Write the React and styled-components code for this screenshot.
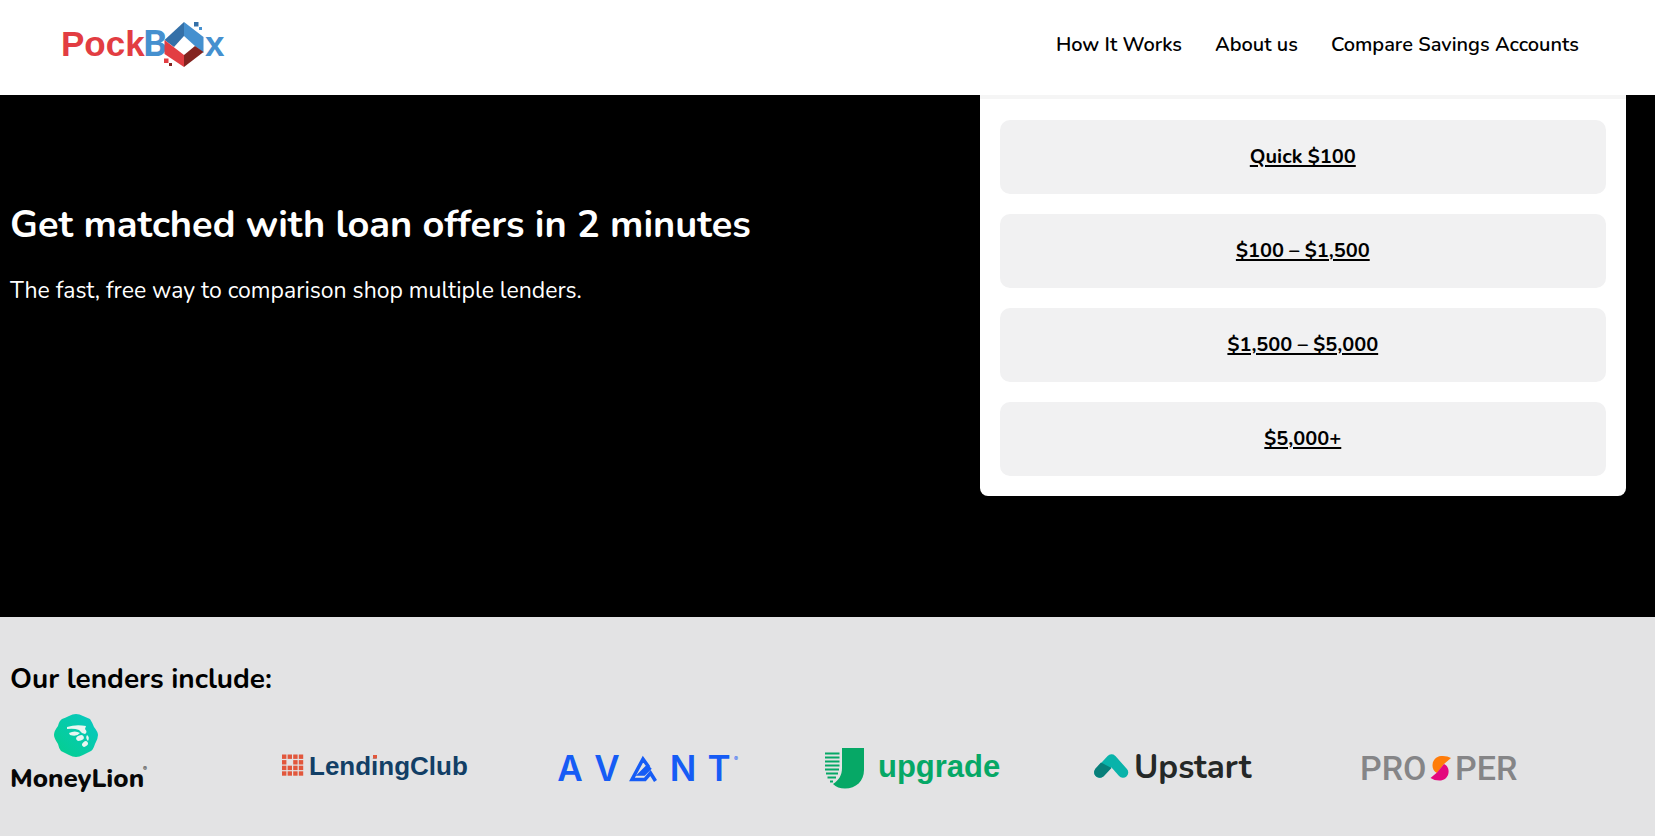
import styled, { createGlobalStyle } from "styled-components";

const GlobalStyle = createGlobalStyle`
  * {
    box-sizing: border-box;
  }
  body {
    margin: 0;
    background: #e3e3e4;
    color: #000;
    font-family: Nunito, Lato, "Open Sans", sans-serif;
  }
`;

const Header = styled.header`
  position: sticky;
  top: 0;
  z-index: 1;
  display: flex;
  align-items: center;
  justify-content: space-between;
  padding: 20px 76px 25px 60px;
  background: #fff;
  box-shadow: 0 4px 0 rgba(0, 0, 0, 0.04);
`;

const LogoLink = styled.a`
  display: flex;
`;

const Nav = styled.nav`
  display: flex;
  gap: 33px;
`;

const NavLink = styled.a`
  color: #000;
  font-size: 20px;
  font-weight: 600;
  line-height: 28px;
  text-decoration: none;
`;

const Hero = styled.section`
  display: grid;
  grid-template-columns: 3fr 2fr;
  padding: 0 29px 121px 10px;
  background: #000;
`;

const HeroText = styled.div`
  padding-top: 105px;
  color: #fff;
`;

const Title = styled.h1`
  margin: 0 0 26px;
  font-size: 38px;
  font-weight: 700;
  line-height: 50px;
`;

const Subtitle = styled.p`
  margin: 0;
  font-size: 23px;
  line-height: 30px;
`;

const Card = styled.div`
  display: flex;
  flex-direction: column;
  gap: 20px;
  padding: 25px 20px 20px;
  background: #fff;
  border-radius: 0 0 8px 8px;
`;

const AmountLink = styled.a`
  padding: 22px;
  background: #f1f1f2;
  border-radius: 10px;
  color: #000;
  font-size: 20px;
  font-weight: 700;
  line-height: 30px;
  text-align: center;
  text-decoration: underline;
  text-decoration-thickness: 2px;
  text-underline-offset: 2px;
`;

const Lenders = styled.section`
  padding: 42px 29px 41px 10px;
`;

const LendersTitle = styled.h2`
  margin: 0 0 14px;
  font-size: 28px;
  font-weight: 700;
  line-height: 40px;
`;

const LenderList = styled.ul`
  display: grid;
  grid-template-columns: repeat(6, 1fr);
  align-items: end;
  margin: 0;
  padding: 0;
  list-style: none;
`;

const Lender = styled.li`
  display: flex;
`;

const Logo = styled.svg`
  overflow: visible;
`;

const Wordmark = styled.text`
  font-family: ${(p) => p.$font || "Inter"}, sans-serif;
  font-size: ${(p) => p.$size}px;
  font-weight: ${(p) => p.$weight || 700};
`;

const PockBoxLogo = () => (
  <Logo width="170" height="50" viewBox="60 20 170 50" role="img" aria-label="PockBox">
    <Wordmark $font="Liberation Sans" $size={35} x="61" y="56" fill="#e23d42">
      Pock
    </Wordmark>
    <Wordmark $font="Lato" $size={36} $weight={900} x="143" y="56" fill="#4590cf">
      B
    </Wordmark>
    <Wordmark $font="Liberation Sans" $size={35} x="205" y="56" fill="#4590cf">
      x
    </Wordmark>
    <path d="M164.500 40 184 22V36L174 47Z" fill="#3470a8" />
    <path d="M184 22 203.500 37V53L195 46 184 36Z" fill="#4590cf" />
    <path d="M164.500 40 184 55V67L164.500 54Z" fill="#e23d42" />
    <path d="M184 55 195 46 203.500 52 184 67Z" fill="#84231f" />
    <path d="M194 22h4.500v4.500h-4.500z" fill="#3470a8" />
    <path d="M199 27h3v3h-3z" fill="#4590cf" />
    <path d="M164 58.500h4.500v4.500h-4.500z" fill="#e23d42" />
    <path d="M169 63h3v3h-3z" fill="#84231f" />
  </Logo>
);

const MoneyLionLogo = () => (
  <Logo width="140" height="82" viewBox="-1 0 140 82" role="img" aria-label="MoneyLion">
    <defs>
      <linearGradient id="lion" x1="0" y1="1" x2="1" y2="0">
        <stop offset="0" stopColor="#04cf8c" />
        <stop offset="1" stopColor="#08c8c4" />
      </linearGradient>
    </defs>
    <path
      d="M58 3Q65-1 72 3L79 6Q81 9 83 14Q87 19 87 22Q87 26 84 31Q82 37 80 38Q76 40 72 42Q65 46 58 42Q54 40 50 38Q48 36 47 31Q43 25 43 22Q43 18 47 13Q48 8 51 6Q54 5 58 3Z"
      fill="url(#lion)"
    />
    <g fill="#e9f6f2">
      <path d="M56 14Q65 11 75 13L74 16Q77 19 74 21Q70 20 68 17Q63 15 56 16Z" />
      <path d="M58 20Q64 17 69 20Q66 24 59 22Z" />
      <ellipse cx="69" cy="25" rx="4" ry="2.600" transform="rotate(-20 69 25)" />
      <ellipse cx="74" cy="31" rx="3.200" ry="2.400" transform="rotate(-40 74 31)" />
      <path d="M76 22Q79 24 77 28Q74 25 76 22Z" />
    </g>
    <Wordmark $font="Nunito" $size={26} $weight={800} x="-1" y="74" fill="#080808">
      MoneyLion
    </Wordmark>
    <Wordmark $size={6} x="132" y="58" fill="#333">
      ®
    </Wordmark>
  </Logo>
);

const squares = [0, 1, 2, 3].flatMap((row) =>
  [0, 1, 2, 3].map((col) => ({ row, col }))
).filter(({ row, col }) => !(row === 1 && col === 1));

const LendingClubLogo = () => (
  <Logo width="200" height="48" viewBox="280 747 200 48" role="img" aria-label="LendingClub">
    {squares.map(({ row, col }) => (
      <rect
        key={`${row}${col}`}
        x={283 + col * 5.600}
        y={754.500 + row * 5.600}
        width="4.400"
        height="4.400"
        fill="#e2573c"
      />
    ))}
    <Wordmark $font="Liberation Sans" $size={26} x="310" y="775" fill="#123f66">
      LendingClub
    </Wordmark>
    <path d="M373 754h7v4.500h-7z" fill="#e3e3e4" />
    <path d="M374 755h4v3.500h-4z" fill="#e2573c" />
  </Logo>
);

const AvantLogo = () => (
  <Logo width="196" height="48" viewBox="549 747 196 48" role="img" aria-label="Avant">
    <g fill="#165cf5" textAnchor="middle">
      <Wordmark $size={35} $weight={600} x="570" y="781">A</Wordmark>
      <Wordmark $size={35} $weight={600} x="607" y="781">V</Wordmark>
      <Wordmark $size={35} $weight={600} x="683" y="781">N</Wordmark>
      <Wordmark $size={35} $weight={600} x="719" y="781">T</Wordmark>
      <Wordmark $size={6} $weight={400} x="736" y="761">®</Wordmark>
    </g>
    <path
      d="M655.500 781 650.500 773 645 779.500H632L643 759 648 766 640 774H644L650.500 767.500"
      fill="none"
      stroke="#165cf5"
      strokeWidth="3.500"
    />
  </Logo>
);

const UpgradeLogo = () => (
  <Logo width="196" height="48" viewBox="818 747 196 48" role="img" aria-label="Upgrade">
    <path d="M842 748h22v22c0 11-8 18.500-19 18.500-5 0-9-1.500-12-4.500 6-4 9-9 9-16Z" fill="#06a866" />
    <path
      d="M825 753.500h14.500M825 757.500h14.500M825 761.500h14.500M825 765.500h14.500M825 769.500h14M826 773.500h12M827.500 777.500h8.500M830 781.500h3"
      stroke="#06a866"
      strokeWidth="2"
    />
    <Wordmark $font="Liberation Sans" $size={31} x="878" y="777" fill="#06a866">
      upgrade
    </Wordmark>
  </Logo>
);

const UpstartLogo = () => (
  <Logo width="180" height="48" viewBox="1086 747 180 48" role="img" aria-label="Upstart">
    <path
      d="M1098.500 772.500 1110.500 759.500 1122 772.500"
      fill="none"
      stroke="#09b3aa"
      strokeWidth="10.500"
      strokeLinecap="round"
      strokeLinejoin="round"
    />
    <path d="M1100 762.500 1110.500 768 1102.500 776.500C1097 780.500 1090 774 1094.500 768.500Z" fill="#087f7a" />
    <Wordmark $font="Nunito" $size={33} $weight={700} x="1133" y="778" fill="#252827">
      Upstart
    </Wordmark>
  </Logo>
);

const ProsperLogo = () => (
  <Logo width="180" height="48" viewBox="1355 747 180 48" role="img" aria-label="Prosper">
    <g fill="#858587">
      <Wordmark $font="Roboto" $size={34} $weight={500} x="1358" y="780">PRO</Wordmark>
      <Wordmark $font="Roboto" $size={34} $weight={500} x="1453" y="780">PER</Wordmark>
    </g>
    <path d="M1449 758 1442 764 1435 773C1428 770 1429 757 1439 756Q1445 755.500 1449 758Z" fill="#ff7c0a" />
    <path d="M1428.500 778 1435 772.500 1442 764C1449 767 1448 779 1439 780.500Q1433 781 1428.500 778Z" fill="#e4087e" />
  </Logo>
);

const amounts = ["Quick $100", "$100 – $1,500", "$1,500 – $5,000", "$5,000+"];
const links = ["How It Works", "About us", "Compare Savings Accounts"];
const lenders = [
  MoneyLionLogo,
  LendingClubLogo,
  AvantLogo,
  UpgradeLogo,
  UpstartLogo,
  ProsperLogo,
];

const App = () => {
  return (
    <>
      <GlobalStyle />
      <Header>
        <LogoLink href="#home">
          <PockBoxLogo />
        </LogoLink>
        <Nav>
          {links.map((label) => (
            <NavLink key={label} href="#nav">{label}</NavLink>
          ))}
        </Nav>
      </Header>
      <main>
        <Hero>
          <HeroText>
            <Title>Get matched with loan offers in 2 minutes</Title>
            <Subtitle>The fast, free way to comparison shop multiple lenders.</Subtitle>
          </HeroText>
          <Card>
            {amounts.map((amount) => (
              <AmountLink key={amount} href="#apply">{amount}</AmountLink>
            ))}
          </Card>
        </Hero>
        <Lenders>
          <LendersTitle>Our lenders include:</LendersTitle>
          <LenderList>
            {lenders.map((LenderLogo, i) => (
              <Lender key={i}>
                <LenderLogo />
              </Lender>
            ))}
          </LenderList>
        </Lenders>
      </main>
    </>
  );
};

export default App;
